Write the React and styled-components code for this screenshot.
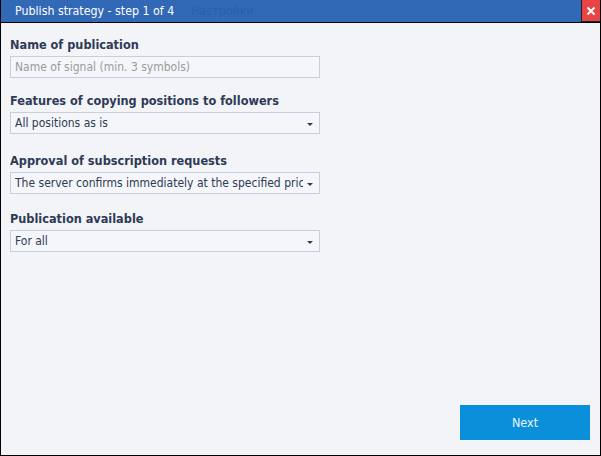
import React from "react";
import styled, { createGlobalStyle } from "styled-components";

const GlobalStyle = createGlobalStyle`
  html, body {
    margin: 0;
    padding: 0;
    background: #f2f4f7;
  }
  * {
    box-sizing: border-box;
  }
`;

const font = `"DejaVu Sans Condensed", "DejaVu Sans", Tahoma, sans-serif`;

const Window = styled.div`
  width: 601px;
  height: 456px;
  border: 1px solid #000;
  border-top: none;
  background: #f2f4f7;
  display: flex;
  flex-direction: column;
  font-family: ${font};
  font-stretch: condensed;
`;

const TitleBar = styled.div`
  height: 23px;
  background: #3269b6;
  border-bottom: 1px solid #000;
  display: flex;
  align-items: center;
  padding-left: 14px;
  position: relative;
`;

const Title = styled.span`
  color: #fff;
  font-size: 12.3px;
`;

const GhostTitle = styled.span`
  color: #2c5ea8;
  font-size: 12.3px;
  margin-left: 17px;
`;

const CloseButton = styled.div`
  position: absolute;
  right: 0;
  top: 0;
  width: 19px;
  height: 22px;
  background: #e84445;
  border-left: 1px solid #222;
  border-bottom: 1px solid #222;
  display: flex;
  align-items: center;
  justify-content: center;
`;

const Body = styled.div`
  flex: 1;
  display: flex;
  flex-direction: column;
  padding: 14px 10px 0 9px;
`;

const Field = styled.div`
  display: flex;
  flex-direction: column;
  margin-bottom: ${(p) => p.$gap || 15}px;
`;

const Label = styled.div`
  font-size: 12.6px;
  font-weight: bold;
  color: #2e3a56;
  height: 19px;
  line-height: 16px;
`;

const Box = styled.div`
  width: 310px;
  height: 22px;
  border: 1px solid #c6cee0;
  background: #f4f6f9;
  display: flex;
  align-items: center;
  padding: 0 4px;
  font-size: 12px;
  color: ${(p) => (p.$placeholder ? "#9b9b9b" : "#2e3a56")};
  overflow: hidden;
  white-space: nowrap;
`;

const BoxText = styled.span`
  flex: 1;
  overflow: hidden;
`;

const Arrow = styled.span`
  width: 0;
  height: 0;
  border-left: 3px solid transparent;
  border-right: 3px solid transparent;
  border-top: 3px solid #2e3a56;
  margin: 2px 2px 0 4px;
`;

const Footer = styled.div`
  margin-top: auto;
  display: flex;
  justify-content: flex-end;
  padding: 0 10px 15px 0;
`;

const NextButton = styled.button`
  width: 130px;
  height: 35px;
  border: none;
  background: #0a8fdb;
  color: #eaf4fc;
  font-family: ${font};
  font-stretch: condensed;
  font-size: 12.5px;
`;

const Select = ({ value }) => (
  <Box>
    <BoxText>{value}</BoxText>
    <Arrow />
  </Box>
);

export default function App() {
  return (
    <>
      <GlobalStyle />
      <Window>
        <TitleBar>
          <Title>Publish strategy - step 1 of 4</Title>
          <GhostTitle>Настройки</GhostTitle>
          <CloseButton>
            <svg width="10" height="10" viewBox="0 0 10 10">
              <path d="M1.5 1.5L8.5 8.5M8.5 1.5L1.5 8.5" stroke="#fff" strokeWidth="2" />
            </svg>
          </CloseButton>
        </TitleBar>
        <Body>
          <Field>
            <Label>Name of publication</Label>
            <Box $placeholder>Name of signal (min. 3 symbols)</Box>
          </Field>
          <Field $gap={19}>
            <Label>Features of copying positions to followers</Label>
            <Select value="All positions as is" />
          </Field>
          <Field $gap={17}>
            <Label>Approval of subscription requests</Label>
            <Select value="The server confirms immediately at the specified price" />
          </Field>
          <Field>
            <Label>Publication available</Label>
            <Select value="For all" />
          </Field>
        </Body>
        <Footer>
          <NextButton>Next</NextButton>
        </Footer>
      </Window>
    </>
  );
}
